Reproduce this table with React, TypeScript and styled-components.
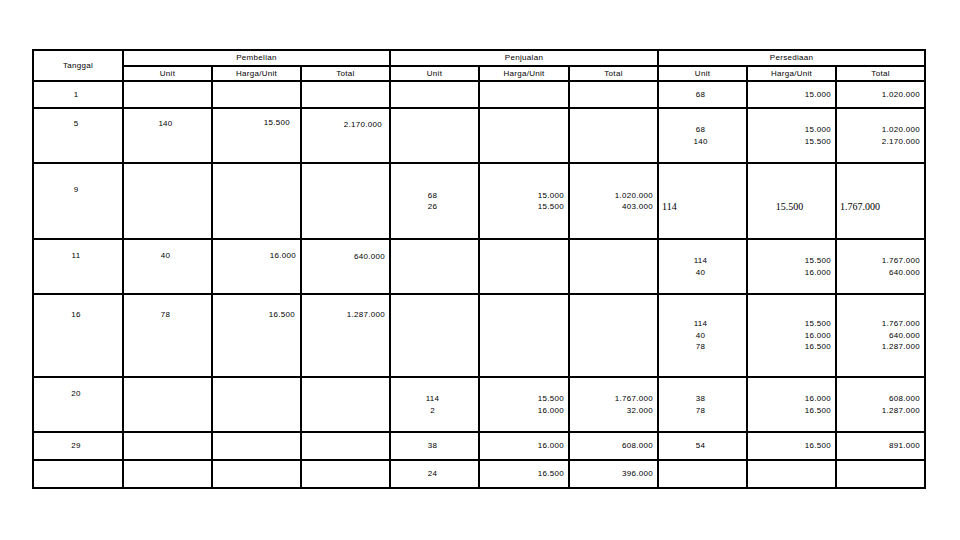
import React from "react";
import styled, { createGlobalStyle } from "styled-components";

const GlobalStyle = createGlobalStyle`
  html, body { margin: 0; padding: 0; background: #ffffff; }
  body { font-family: "Liberation Sans", Arial, sans-serif; color: #000; }
`;

const Page = styled.div`
  width: 960px;
  height: 540px;
  box-sizing: border-box;
  padding: 49px 0 0 32px;
  background: #ffffff;
`;

const Table = styled.table`
  border-collapse: collapse;
  table-layout: fixed;
  width: 894px;
  border: 2px solid #000;
  font-size: 8px;
  letter-spacing: 0.3px;
`;

const HeadCell = styled.th<{ $thinBottom?: boolean }>`
  border: 2px solid #000;
  ${(p) => (p.$thinBottom ? "border-bottom: 1px solid #000;" : "")}
  font-weight: normal;
  text-align: center;
  vertical-align: middle;
  padding: 0;
  line-height: 10px;
  white-space: nowrap;
`;

const Row = styled.tr<{ $h: number }>`
  height: ${(p) => p.$h}px;
`;

const Cell = styled.td<{
  $align: "left" | "center" | "right";
  $v: "top" | "middle";
  $pt: number;
  $pr: number;
  $pl: number;
  $serif?: boolean;
}>`
  border: 2px solid #000;
  padding: ${(p) => `${p.$pt}px ${p.$pr}px 0 ${p.$pl}px`};
  text-align: ${(p) => p.$align};
  vertical-align: ${(p) => p.$v};
  line-height: 11.5px;
  white-space: nowrap;
  overflow: hidden;
  ${(p) =>
    p.$serif
      ? `font-family: "Liberation Serif", "Times New Roman", serif; font-size: 10px; letter-spacing: 0;`
      : ""}
`;

const Line = styled.div``;

type Align = "left" | "center" | "right";
type CellSpec = {
  lines?: string[];
  align?: Align;
  v?: "top" | "middle";
  pt?: number;
  pr?: number;
  pl?: number;
  serif?: boolean;
};
type RowSpec = { h: number; cells: CellSpec[] };

const colAlign: Align[] = [
  "center",
  "center", "right", "right",
  "center", "right", "right",
  "center", "right", "right",
];

const E: CellSpec = {};
const m = (...lines: string[]): CellSpec => ({ lines, v: "middle" });
const t = (pt: number, lines: string[], pr?: number): CellSpec => ({ lines, v: "top", pt, pr });

const rows: RowSpec[] = [
  {
    h: 27,
    cells: [m("1"), E, E, E, E, E, E, m("68"), m("15.000"), m("1.020.000")],
  },
  {
    h: 55,
    cells: [
      t(9, ["5"]),
      t(9, ["140"]),
      t(8, ["15.500"], 10),
      t(10, ["2.170.000"], 7),
      E, E, E,
      m("68", "140"),
      m("15.000", "15.500"),
      m("1.020.000", "2.170.000"),
    ],
  },
  {
    h: 76,
    cells: [
      t(20, ["9"]),
      E, E, E,
      m("68", "26"),
      m("15.000", "15.500"),
      m("1.020.000", "403.000"),
      { lines: ["114"], align: "left", v: "top", pt: 37, pl: 3, serif: true },
      { lines: ["15.500"], align: "center", v: "top", pt: 37, serif: true },
      { lines: ["1.767.000"], align: "left", v: "top", pt: 37, pl: 3, serif: true },
    ],
  },
  {
    h: 55,
    cells: [
      t(10, ["11"]),
      t(10, ["40"]),
      t(10, ["16.000"]),
      t(11, ["640.000"]),
      E, E, E,
      m("114", "40"),
      m("15.500", "16.000"),
      m("1.767.000", "640.000"),
    ],
  },
  {
    h: 83,
    cells: [
      t(14, ["16"]),
      t(14, ["78"]),
      t(14, ["16.500"], 5),
      t(14, ["1.287.000"]),
      E, E, E,
      m("114", "40", "78"),
      m("15.500", "16.000", "16.500"),
      m("1.767.000", "640.000", "1.287.000"),
    ],
  },
  {
    h: 55,
    cells: [
      t(10, ["20"]),
      E, E, E,
      m("114", "2"),
      m("15.500", "16.000"),
      m("1.767.000", "32.000"),
      m("38", "78"),
      m("16.000", "16.500"),
      m("608.000", "1.287.000"),
    ],
  },
  {
    h: 28,
    cells: [
      m("29"),
      E, E, E,
      m("38"),
      m("16.000"),
      m("608.000"),
      m("54"),
      m("16.500"),
      m("891.000"),
    ],
  },
  {
    h: 28,
    cells: [E, E, E, E, m("24"), m("16.500"), m("396.000"), E, E, E],
  },
];

const colWidths = [90, 89, 89, 89, 89, 90, 89, 89, 89, 89];
const groups = ["Pembelian", "Penjualan", "Persediaan"];
const subs = ["Unit", "Harga/Unit", "Total"];

export default function App() {
  return (
    <>
      <GlobalStyle />
      <Page>
        <Table>
          <colgroup>
            {colWidths.map((w, i) => (
              <col key={i} style={{ width: w }} />
            ))}
          </colgroup>
          <thead>
            <Row $h={16}>
              <HeadCell rowSpan={2}>Tanggal</HeadCell>
              {groups.map((g) => (
                <HeadCell key={g} colSpan={3} $thinBottom>
                  {g}
                </HeadCell>
              ))}
            </Row>
            <Row $h={15}>
              {groups.map((g) =>
                subs.map((s) => <HeadCell key={g + s}>{s}</HeadCell>)
              )}
            </Row>
          </thead>
          <tbody>
            {rows.map((r, ri) => (
              <Row key={ri} $h={r.h}>
                {r.cells.map((c, ci) => (
                  <Cell
                    key={ci}
                    $align={c.align ?? colAlign[ci]}
                    $v={c.v ?? "middle"}
                    $pt={c.pt ?? 0}
                    $pr={c.pr ?? 4}
                    $pl={c.pl ?? 0}
                    $serif={c.serif}
                  >
                    {(c.lines ?? []).map((l, li) => (
                      <Line key={li}>{l}</Line>
                    ))}
                  </Cell>
                ))}
              </Row>
            ))}
          </tbody>
        </Table>
      </Page>
    </>
  );
}
